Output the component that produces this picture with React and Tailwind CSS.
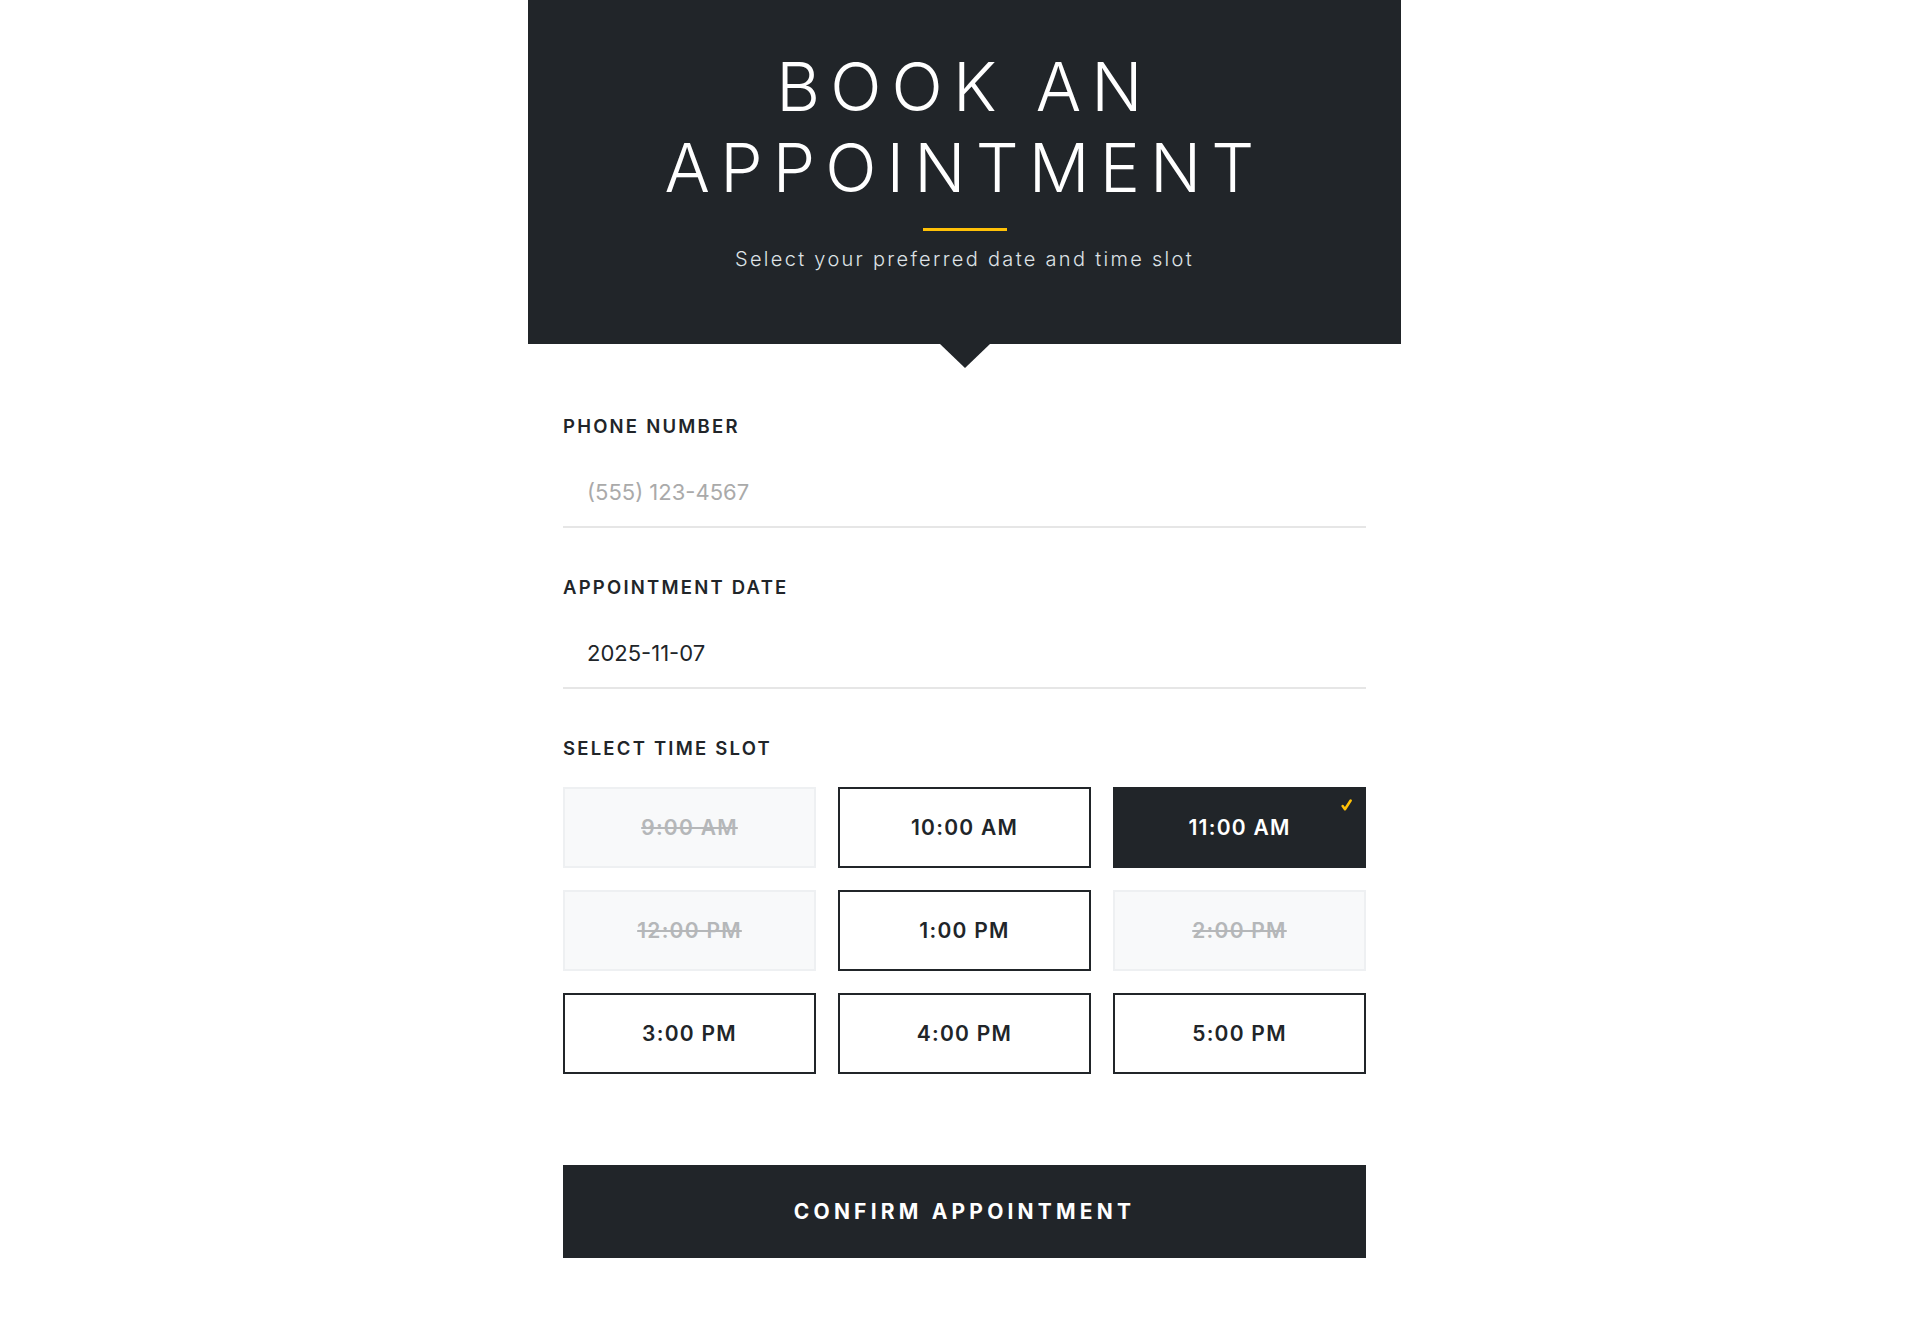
import { useState } from "react";

const SLOTS = [
  { time: "9:00 AM", booked: true },
  { time: "10:00 AM" },
  { time: "11:00 AM" },
  { time: "12:00 PM", booked: true },
  { time: "1:00 PM" },
  { time: "2:00 PM", booked: true },
  { time: "3:00 PM" },
  { time: "4:00 PM" },
  { time: "5:00 PM" },
];

function Field({ label, children }) {
  return (
    <div className="mb-[46px]">
      <label className="mb-[19px] block text-[18.5px] font-semibold leading-[26px] tracking-[0.12em] text-[#212529]">
        {label}
      </label>
      {children}
    </div>
  );
}

function Tick() {
  return (
    <svg
      viewBox="0 0 10 11"
      className="absolute right-[12px] top-[10px] h-[12px] w-[11px]"
      fill="none"
      stroke="#ffc107"
      strokeWidth="2.3"
      strokeLinecap="round"
      strokeLinejoin="round"
    >
      <path d="M1.5 6.5 L3.6 9.4 L8.8 1.4" />
    </svg>
  );
}

function SlotButton({ slot, selected, onPick }) {
  if (slot.booked) {
    return (
      <button
        type="button"
        disabled
        className="h-[81px] cursor-not-allowed border-2 border-[#eef0f2] bg-[#f8f9fa] text-[21px] font-semibold tracking-[0.06em] text-[#b5b7b9] line-through"
      >
        {slot.time}
      </button>
    );
  }

  return (
    <button
      type="button"
      onClick={() => onPick(slot.time)}
      className={
        selected
          ? "relative h-[81px] border-2 border-[#212529] bg-[#212529] text-[21px] font-semibold tracking-[0.06em] text-white"
          : "relative h-[81px] border-2 border-[#212529] bg-white text-[21px] font-semibold tracking-[0.06em] text-[#212529]"
      }
    >
      {slot.time}
      {selected && <Tick />}
    </button>
  );
}

export default function App() {
  const [picked, setPicked] = useState("11:00 AM");

  return (
    <div className="min-h-screen bg-white font-['Inter',sans-serif]">
      <div className="mx-auto w-full max-w-[873px] translate-x-px">
        <header className="relative bg-[#212529] px-10 pb-[70px] pt-[46px] text-center">
          <h1 className="text-[67.5px] font-light leading-[81px] tracking-[0.15em] text-white">
            BOOK AN APPOINTMENT
          </h1>
          <div className="mx-auto mt-5 h-[3px] w-[84px] bg-[#ffc107]" />
          <p className="mt-[13px] text-[20px] font-light leading-[30px] tracking-[0.115em] text-[#dee2e6]">
            Select your preferred date and time slot
          </p>
          <div className="absolute left-1/2 top-full -translate-x-1/2 border-x-[25px] border-t-[24px] border-x-transparent border-t-[#212529]" />
        </header>

        <form className="px-[35px] pb-20 pt-[69px]" onSubmit={(e) => e.preventDefault()}>
          <Field label="PHONE NUMBER">
            <input
              type="tel"
              placeholder="(555) 123-4567"
              className="block w-full border-b-2 border-[#e6e6e6] bg-transparent px-6 py-[19px] text-[22px] leading-[30px] text-[#212529] outline-none placeholder:text-[#aaaaaa]"
            />
          </Field>

          <Field label="APPOINTMENT DATE">
            <input
              type="text"
              defaultValue="2025-11-07"
              className="block w-full border-b-2 border-[#e6e6e6] bg-transparent px-6 py-[19px] text-[22px] leading-[30px] text-[#212529] outline-none"
            />
          </Field>

          <div>
            <label className="mb-[26px] block text-[18.5px] font-semibold leading-[26px] tracking-[0.12em] text-[#212529]">
              SELECT TIME SLOT
            </label>
            <div className="grid grid-cols-3 gap-[22px]">
              {SLOTS.map((s) => (
                <SlotButton
                  key={s.time}
                  slot={s}
                  selected={picked === s.time}
                  onPick={setPicked}
                />
              ))}
            </div>
          </div>

          <button
            type="submit"
            className="mt-[91px] block h-[93px] w-full bg-[#212529] text-[21px] font-bold tracking-[0.2em] text-white"
          >
            CONFIRM APPOINTMENT
          </button>
        </form>
      </div>
    </div>
  );
}
